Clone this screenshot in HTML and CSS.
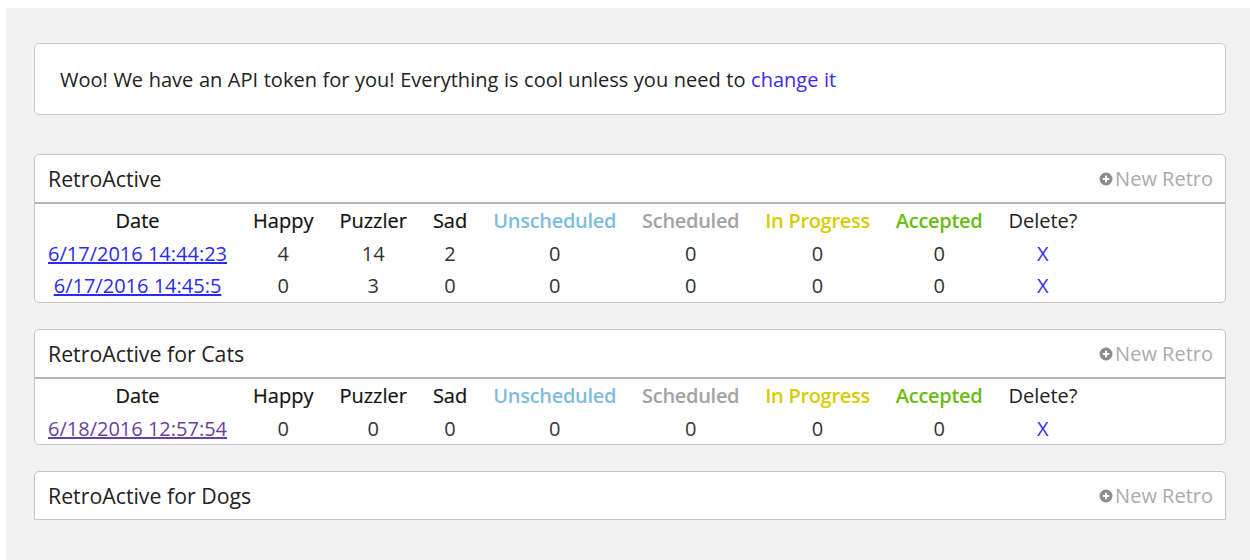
FILE: index.html
```html
<!DOCTYPE html>
<html lang="en">
<head>
<meta charset="utf-8">
<title>RetroActive</title>
<link rel="stylesheet" href="styles.css">
</head>
<body>
<div class="page">
  <div class="alert">
    <span>Woo! We have an API token for you! Everything is cool unless you need to <a class="plain-link" href="#">change it</a></span>
  </div>

  <section class="panel">
    <header class="panel-head">
      <span class="team">RetroActive</span>
      <a class="new-retro" href="#">
        <svg class="plus" viewBox="0 0 14 14" width="14" height="14"><circle cx="7" cy="7" r="6.5" fill="#8c8c8c"/><path d="M7 3.8v6.4M3.8 7h6.4" stroke="#fff" stroke-width="2"/></svg>New Retro
      </a>
    </header>
    <table class="retros">
      <thead>
        <tr>
          <th>Date</th><th>Happy</th><th>Puzzler</th><th>Sad</th>
          <th class="unscheduled">Unscheduled</th><th class="scheduled">Scheduled</th>
          <th class="progress">In Progress</th><th class="accepted">Accepted</th><th class="del-h">Delete?</th>
        </tr>
      </thead>
      <tbody>
        <tr>
          <td><a class="date-link" href="#">6/17/2016 14:44:23</a></td><td>4</td><td>14</td><td>2</td>
          <td>0</td><td>0</td><td>0</td><td>0</td><td><a class="del" href="#">X</a></td>
        </tr>
        <tr>
          <td><a class="date-link" href="#">6/17/2016 14:45:5</a></td><td>0</td><td>3</td><td>0</td>
          <td>0</td><td>0</td><td>0</td><td>0</td><td><a class="del" href="#">X</a></td>
        </tr>
      </tbody>
    </table>
  </section>

  <section class="panel">
    <header class="panel-head">
      <span class="team">RetroActive for Cats</span>
      <a class="new-retro" href="#">
        <svg class="plus" viewBox="0 0 14 14" width="14" height="14"><circle cx="7" cy="7" r="6.5" fill="#8c8c8c"/><path d="M7 3.8v6.4M3.8 7h6.4" stroke="#fff" stroke-width="2"/></svg>New Retro
      </a>
    </header>
    <table class="retros">
      <thead>
        <tr>
          <th>Date</th><th>Happy</th><th>Puzzler</th><th>Sad</th>
          <th class="unscheduled">Unscheduled</th><th class="scheduled">Scheduled</th>
          <th class="progress">In Progress</th><th class="accepted">Accepted</th><th class="del-h">Delete?</th>
        </tr>
      </thead>
      <tbody>
        <tr>
          <td><a class="date-link visited" href="#">6/18/2016 12:57:54</a></td><td>0</td><td>0</td><td>0</td>
          <td>0</td><td>0</td><td>0</td><td>0</td><td><a class="del" href="#">X</a></td>
        </tr>
      </tbody>
    </table>
  </section>

  <section class="panel panel-empty">
    <header class="panel-head">
      <span class="team">RetroActive for Dogs</span>
      <a class="new-retro" href="#">
        <svg class="plus" viewBox="0 0 14 14" width="14" height="14"><circle cx="7" cy="7" r="6.5" fill="#8c8c8c"/><path d="M7 3.8v6.4M3.8 7h6.4" stroke="#fff" stroke-width="2"/></svg>New Retro
      </a>
    </header>
  </section>
</div>
</body>
</html>
```

FILE: styles.css
```css
html, body {
  margin: 0;
  background: #fff;
}

body {
  font-family: "Open Sans", "Noto Sans", sans-serif;
  color: #222;
  font-size: 20px;
}

.page {
  margin: 8px 0 0 6px;
  min-height: 552px;
  box-sizing: border-box;
  background: #f2f2f2;
  padding: 35px 24px 1px 28px;
}

.alert {
  height: 72px;
  box-sizing: border-box;
  display: flex;
  align-items: center;
  padding: 0 25px;
  background: #fff;
  border: 1px solid #c9c9c9;
  border-radius: 5px;
  color: #222;
  word-spacing: 0.4px;
}

.plain-link {
  color: #3a2cf0;
  text-decoration: none;
}

.panel {
  margin-top: 26px;
  background: #fff;
  border: 1px solid #c6c6c6;
  border-radius: 5px;
}

.alert + .panel {
  margin-top: 39px;
}

.panel-empty {
  border-radius: 5px 5px 0 0;
}

.panel-head {
  height: 47px;
  display: flex;
  align-items: center;
  justify-content: space-between;
  padding: 0 12px 0 13px;
  border-bottom: 2px solid #b5b5b5;
}

.panel-empty .panel-head {
  border-bottom: none;
}

.team {
  color: #222;
  font-size: 21.3px;
}

.new-retro {
  display: flex;
  align-items: center;
  gap: 2px;
  color: #ababab;
  text-decoration: none;
}

.plus {
  display: block;
  margin-top: 1px;
}

.retros {
  border-collapse: collapse;
  color: #333;
}

.retros th,
.retros td {
  padding: 0 13px;
  height: 32.7px;
  text-align: center;
  white-space: nowrap;
}

.retros th {
  font-weight: 400;
  color: #111;
  -webkit-text-stroke: 0.2px #111;
}

.retros th.unscheduled,
.retros th.scheduled,
.retros th.progress,
.retros th.accepted {
  font-weight: 600;
  letter-spacing: -0.3px;
  -webkit-text-stroke: 0;
}

.retros th.unscheduled { color: #7fbddc; }
.retros th.scheduled { color: #a3a3a3; }
.retros th.progress { color: #d7cc00; }
.retros th.accepted { color: #6cbb14; }
.retros th.del-h { -webkit-text-stroke: 0; color: #222; }

.date-link {
  color: #2b2bef;
  text-decoration: underline;
}

.date-link.visited {
  color: #6b3fa0;
}

.del {
  color: #3b2cf5;
  text-decoration: none;
}
```
